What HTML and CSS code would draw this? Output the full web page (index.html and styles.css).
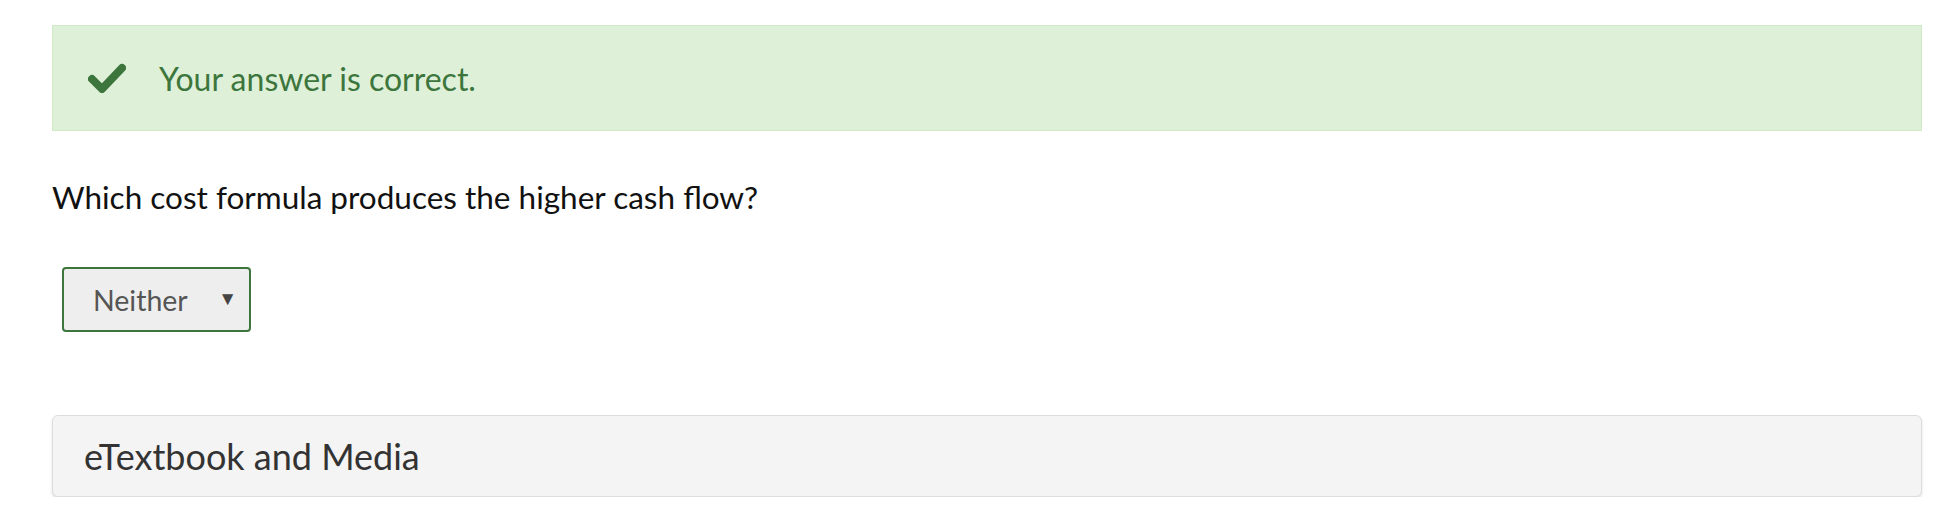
FILE: index.html
```html
<!DOCTYPE html>
<html lang="en">
<head>
  <meta charset="UTF-8" />
  <title>Question</title>
  <link rel="stylesheet" href="styles.css">
</head>
<body>
  <div class="page">
    <div class="alert-success">
      <svg class="check" width="38" height="30" viewBox="0 0 38 30">
        <path d="M4 16 L14 26 L34 5" fill="none" stroke="#3c763d" stroke-width="8" stroke-linecap="round" stroke-linejoin="round"/>
      </svg>
      <span>Your answer is correct.</span>
    </div>

    <p class="question">Which cost formula produces the higher cash flow?</p>

    <div class="answer">
      <div class="select-box">
        <span>Neither</span>
        <span class="caret">&#9660;</span>
      </div>
    </div>

    <div class="panel">eTextbook and Media</div>
  </div>
</body>
</html>
```

FILE: styles.css
```css
body {
  margin: 0;
  background: #fff;
  font-family: Lato, 'Open Sans', sans-serif;
}
.page {
  padding: 25px 26px 0 52px;
}
.alert-success {
  display: flex;
  align-items: center;
  gap: 33px;
  height: 104px;
  padding: 0 35px;
  background: #dff0d8;
  border: 1px solid #d0e9c6;
  color: #3c763d;
  font-size: 32px;
}
.check {
  flex-shrink: 0;
}
.question {
  margin: 47px 0 0;
  font-size: 31.5px;
  color: #111;
}
.answer {
  margin-top: 51px;
  padding-left: 10px;
}
.select-box {
  display: inline-flex;
  align-items: center;
  justify-content: space-between;
  box-sizing: border-box;
  width: 189px;
  height: 65px;
  padding: 0 12px 0 29px;
  background: #eee;
  border: 2px solid #3c763d;
  border-radius: 4px;
  color: #555;
  font-size: 28.5px;
}
.caret {
  font-size: 19px;
  color: #444;
  margin-top: -4px;
}
.panel {
  margin-top: 83px;
  height: 80px;
  display: flex;
  align-items: center;
  padding-left: 31px;
  background: #f4f4f4;
  border: 1px solid #ddd;
  border-radius: 6px;
  box-shadow: 0 2px 3px rgba(0,0,0,0.12);
  color: #333;
  font-size: 36px;
}
```
